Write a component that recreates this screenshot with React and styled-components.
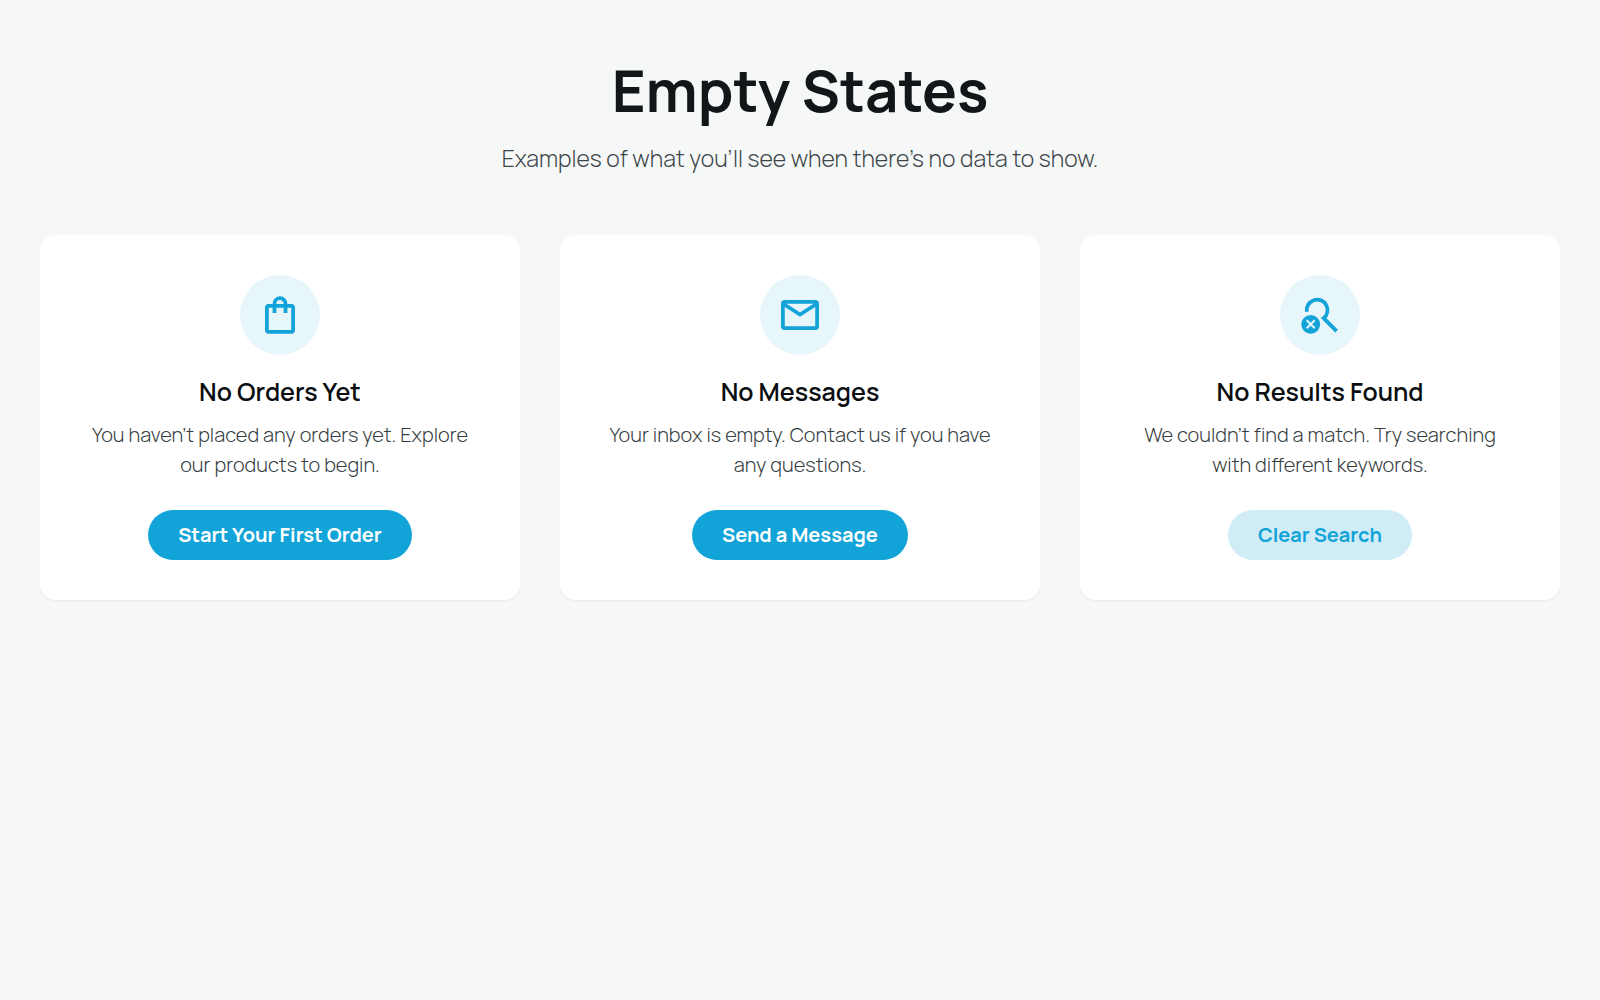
import React from "react";
import styled, { createGlobalStyle } from "styled-components";

const GlobalStyle = createGlobalStyle`
  *, *::before, *::after { box-sizing: border-box; }
  body {
    margin: 0;
    background: #f6f8f8;
    color: #111618;
    font-family: Manrope, Inter, "Open Sans", sans-serif;
  }
`;

const Page = styled.main`
  padding: 60px 40px;
`;

const Header = styled.header`
  margin-bottom: 60px;
  text-align: center;
`;

const PageTitle = styled.h1`
  margin: 0 0 22px;
  font-size: 58px;
  font-weight: 700;
  line-height: 60px;
`;

const Subtitle = styled.p`
  margin: 0;
  color: #3c4549;
  font-size: 23px;
  font-weight: 300;
  line-height: 33px;
`;

const Grid = styled.div`
  display: grid;
  grid-template-columns: repeat(auto-fit, minmax(360px, 1fr));
  gap: 40px;
`;

const Card = styled.section`
  display: flex;
  flex-direction: column;
  align-items: center;
  padding: 40px;
  border-radius: 16px;
  background: #fff;
  box-shadow: 0 1px 2px rgba(0, 0, 0, 0.06);
  text-align: center;
`;

const IconCircle = styled.div`
  width: 80px;
  height: 80px;
  margin-bottom: 20px;
  border-radius: 50%;
  background: #e7f6fb;
  color: #12a3d8;
`;

const Icon = styled.svg`
  display: block;
  width: 100%;
  height: 100%;
  fill: none;
  stroke: currentColor;
  stroke-width: 3.75;
`;

const CardTitle = styled.h2`
  margin: 0 0 12px;
  color: #0b0e10;
  font-size: 25px;
  font-weight: 600;
  line-height: 33px;
`;

const CardText = styled.p`
  max-width: 390px;
  margin: 0 0 30px;
  color: #353d41;
  font-size: 20px;
  font-weight: 300;
  line-height: 30px;
`;

const Button = styled.button`
  height: 50px;
  padding: 0 30px;
  border: 0;
  border-radius: 25px;
  background: ${({ $soft }) => ($soft ? "#d0edf7" : "#12a3d8")};
  color: ${({ $soft }) => ($soft ? "#12a3d8" : "#fff")};
  font-family: inherit;
  font-size: 20px;
  font-weight: 700;
  line-height: 30px;
  cursor: pointer;
`;

const BagIcon = () => (
  <Icon viewBox="0 0 80 80" aria-hidden="true">
    <rect x="26.9" y="30.9" width="26.2" height="26" rx="1.8" />
    <path d="M34.5 38v-9.3a5.5 5.5 0 0 1 11 0V38" />
  </Icon>
);

const MailIcon = () => (
  <Icon viewBox="0 0 80 80" aria-hidden="true">
    <rect x="22.9" y="26.9" width="34.2" height="26.2" rx="1.8" />
    <path d="M23.5 29 40 39.5 56.5 29" />
  </Icon>
);

const Cross = styled.path`
  stroke: #e7f6fb;
  stroke-width: 2;
`;

const SearchOffIcon = () => (
  <Icon viewBox="0 0 80 80" aria-hidden="true">
    <path d="M26.9 36.8A10.4 10.4 0 1 1 43.6 43.2L56.6 56.2" />
    <circle cx="30.7" cy="49.3" r="9.4" fill="currentColor" stroke="none" />
    <Cross d="m26.7 45.3 8 8m0-8-8 8" />
  </Icon>
);

const states = [
  {
    id: "orders",
    icon: BagIcon,
    title: "No Orders Yet",
    text: "You haven’t placed any orders yet. Explore our products to begin.",
    action: "Start Your First Order",
  },
  {
    id: "messages",
    icon: MailIcon,
    title: "No Messages",
    text: "Your inbox is empty. Contact us if you have any questions.",
    action: "Send a Message",
  },
  {
    id: "results",
    icon: SearchOffIcon,
    title: "No Results Found",
    text: "We couldn’t find a match. Try searching with different keywords.",
    action: "Clear Search",
    soft: true,
  },
];

export default function App() {
  return (
    <>
      <GlobalStyle />
      <Page>
        <Header>
          <PageTitle>Empty States</PageTitle>
          <Subtitle>Examples of what you’ll see when there’s no data to show.</Subtitle>
        </Header>
        <Grid>
          {states.map(({ id, icon: StateIcon, title, text, action, soft }) => (
            <Card key={id} aria-labelledby={id}>
              <IconCircle>
                <StateIcon />
              </IconCircle>
              <CardTitle id={id}>{title}</CardTitle>
              <CardText>{text}</CardText>
              <Button type="button" $soft={soft}>
                {action}
              </Button>
            </Card>
          ))}
        </Grid>
      </Page>
    </>
  );
}
